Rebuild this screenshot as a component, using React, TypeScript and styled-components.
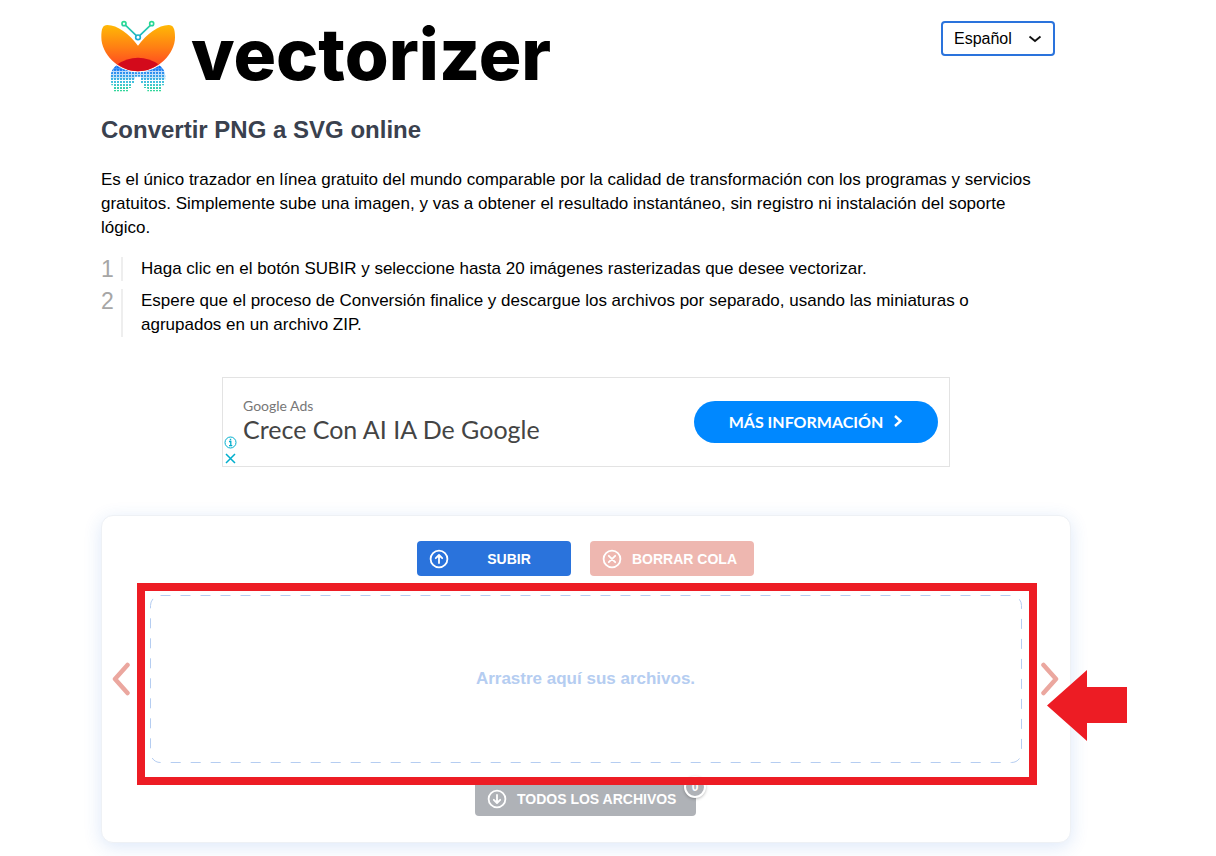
import React, { useState } from 'react';
import styled, { createGlobalStyle, css } from 'styled-components';

const GlobalStyle = createGlobalStyle`
  *, *::before { box-sizing: border-box; }
  body {
    margin: 0;
    background: #fff;
    color: #000;
    font-family: "Liberation Sans", Arial, sans-serif;
    font-size: 17px;
    line-height: 24px;
  }
`;

const Page = styled.main`
  padding: 20px 44px 13px 0;
  overflow-x: clip;
`;

const Container = styled.div`
  max-width: 970px;
  margin: 0 auto;
`;

const Intro = styled.div`
  padding-right: 16px;
`;

const Header = styled.header`
  display: flex;
  justify-content: space-between;
  align-items: flex-start;
  height: 74px;
`;

const Brand = styled.a`
  display: flex;
  gap: 16px;
  color: #000;
  text-decoration: none;
`;

const Wordmark = styled.span`
  font-family: Inter, sans-serif;
  font-weight: 800;
  font-size: 71px;
  line-height: 68px;
`;

const SelectWrap = styled.div`
  position: relative;
  margin-top: 1px;
  svg {
    position: absolute;
    right: 13px;
    top: 14px;
    pointer-events: none;
  }
`;

const LanguageSelect = styled.select`
  appearance: none;
  width: 114px;
  height: 35px;
  padding: 0 32px 0 11px;
  border: 2px solid #2a73dc;
  border-radius: 4px;
  background: #fff;
  color: #000;
  font: 16px "Liberation Sans", Arial, sans-serif;
`;

const Title = styled.h1`
  margin: 20px 0 0;
  color: #3a414e;
  font-size: 24px;
  line-height: 32px;
`;

const Lead = styled.p`
  margin: 22px 0 0;
`;

const Steps = styled.ol`
  display: flex;
  flex-direction: column;
  gap: 8px;
  margin: 17px 0 0;
  padding: 0 20px 0 0;
  list-style: none;
  counter-reset: step;
`;

const Step = styled.li`
  display: flex;
  counter-increment: step;
  &::before {
    content: counter(step);
    flex: 0 0 22px;
    border-right: 2px solid #eee;
    color: #a6a6a6;
    font-size: 23px;
    line-height: 24px;
  }
  span { padding-left: 18px; }
`;

const Ad = styled.aside`
  position: relative;
  display: flex;
  align-items: center;
  justify-content: space-between;
  max-width: 728px;
  min-height: 90px;
  margin: 40px auto 0;
  padding: 0 11px 0 20px;
  border: 1px solid #e3e3e3;
`;

const AdCopy = styled.div`
  display: flex;
  flex-direction: column;
  padding-bottom: 2px;
  font-family: Lato, sans-serif;
`;

const AdBrand = styled.span`
  color: #777;
  font-size: 14px;
  line-height: 16px;
`;

const AdHeadline = styled.span`
  color: #444;
  font-size: 25px;
  line-height: 30px;
`;

const AdButton = styled.button`
  display: flex;
  align-items: center;
  justify-content: center;
  gap: 10px;
  width: 244px;
  height: 42px;
  padding: 0 6px 2px;
  border: 0;
  border-radius: 21px;
  background: #08f;
  color: #fff;
  font: 700 16px Lato, sans-serif;
`;

const AdMarks = styled.div`
  position: absolute;
  left: 1px;
  bottom: 1px;
  display: flex;
  flex-direction: column;
  gap: 3px;
`;

const MarkButton = styled.button`
  display: flex;
  padding: 0;
  border: 0;
  background: none;
  color: #00aecd;
`;

const Card = styled.section`
  margin-top: 48px;
  padding: 25px 11px 26px 10px;
  border: 1px solid #eef1f5;
  border-radius: 12px;
  background: #fff;
  box-shadow: 0 4px 18px rgba(42, 115, 220, 0.16);
`;

const Actions = styled.div`
  display: flex;
  justify-content: center;
  gap: 19px;
`;

const tones = { primary: '#2a73dc', danger: '#eeb7b0', muted: '#afb2b7' };

const ActionButton = styled.button<{ $tone: keyof typeof tones; $width: number; $spread?: boolean }>`
  position: relative;
  display: flex;
  align-items: center;
  gap: 10px;
  width: ${p => p.$width}px;
  height: 35px;
  padding: 0 12px;
  border: 0;
  border-radius: 4px;
  background: ${p => tones[p.$tone]};
  color: #fff;
  font: 700 14px "Liberation Sans", Arial, sans-serif;
  white-space: nowrap;
  svg { flex: none; }
  ${p => p.$spread && css`
    span { flex: 1; text-align: center; }
  `}
`;

const Badge = styled.b`
  position: absolute;
  right: -10px;
  top: -5px;
  width: 22px;
  height: 22px;
  border: 2px solid #fff;
  border-radius: 50%;
  background: #afb2b7;
  box-shadow: 0 1px 3px rgba(0, 0, 0, 0.25);
  font-size: 12px;
  line-height: 19px;
  text-align: center;
`;

const Carousel = styled.div`
  display: flex;
  align-items: center;
  margin: 19px 0;
`;

const ArrowButton = styled.button`
  display: flex;
  flex: none;
  padding: 0;
  border: 0;
  background: none;
  color: #eba79f;
`;

const DropArea = styled.div`
  position: relative;
  display: flex;
  flex: 1;
  align-items: center;
  justify-content: center;
  height: 167px;
  margin: 0 20px;
  color: #b5cdf1;
  font-weight: 700;
`;

const DashedOutline = styled.svg`
  position: absolute;
  inset: 0;
  width: 100%;
  height: 100%;
  overflow: visible;
`;

const Highlight = styled.div`
  position: absolute;
  z-index: 1;
  inset: -12px -16px -23px -13px;
  border: 8px solid #ed1c24;
  pointer-events: none;
`;

const Pointer = styled.svg`
  position: absolute;
  z-index: 1;
  top: 75px;
  right: -106px;
  pointer-events: none;
`;

const Download = styled.div`
  display: flex;
  justify-content: center;
`;

function Butterfly() {
  return (
    <svg width="74" height="72" viewBox="33 30 222 216" aria-hidden="true">
      <defs>
        <linearGradient id="wing" x1="0" y1="0" x2="0" y2="1">
          <stop offset="0" stopColor="#ffb905" />
          <stop offset="0.5" stopColor="#ff7d14" />
          <stop offset="1" stopColor="#ff3a24" />
        </linearGradient>
        <linearGradient id="tail" gradientUnits="userSpaceOnUse" x1="0" y1="165" x2="0" y2="246">
          <stop offset="0" stopColor="#0a6cf5" />
          <stop offset="0.3" stopColor="#2f90ef" />
          <stop offset="0.65" stopColor="#46c3dd" />
          <stop offset="1" stopColor="#2fd990" />
        </linearGradient>
        <linearGradient id="antenna" gradientUnits="userSpaceOnUse" x1="0" y1="36" x2="0" y2="88">
          <stop offset="0" stopColor="#2bdc8f" />
          <stop offset="1" stopColor="#1ba9d6" />
        </linearGradient>
        <pattern id="cells" width="9" height="9" patternUnits="userSpaceOnUse" x="63" y="168">
          <rect width="6" height="6" fill="#fff" />
        </pattern>
        <mask id="dots">
          <rect x="33" y="160" width="222" height="86" fill="url(#cells)" />
          <rect x="33" y="160" width="222" height="22" fill="#fff" opacity="0.8" />
          <rect x="33" y="182" width="222" height="26" fill="#fff" opacity="0.3" />
        </mask>
      </defs>
      <path
        fill="url(#tail)"
        mask="url(#dots)"
        d="M80 166Q62 178 62 200L64 226H72V244H116V234H126V220H135V200H153V220H162V234H172V244H216V226H224L226 200Q226 178 208 166Z"
      />
      <path
        fill="url(#wing)"
        stroke="#fff"
        strokeWidth="5"
        paintOrder="stroke"
        d="M144 107C118 72 82 45 52 45C38 45 34 56 34 82C34 132 84 184 144 184C204 184 255 132 255 82C255 56 250 45 236 45C206 45 170 72 144 107Z"
      />
      <path fill="#d30a1b" d="M83 163Q110 143 144 143Q178 143 205 163Q178 184 144 184Q110 184 83 163Z" />
      <g fill="none" stroke="url(#antenna)" strokeWidth="5">
        <path d="M107 46L139 77M181 46L149 77" />
        <circle cx="102" cy="41" r="6" />
        <circle cx="185" cy="41" r="6" />
        <circle cx="144" cy="82" r="7" />
      </g>
    </svg>
  );
}

function CircleIcon({ d }: { d: string }) {
  return (
    <svg width="20" height="20" viewBox="0 0 20 20" fill="none" stroke="currentColor" strokeWidth="1.8" strokeLinecap="round" strokeLinejoin="round" aria-hidden="true">
      <circle cx="10" cy="10" r="8.4" />
      <path d={d} />
    </svg>
  );
}

function CarouselArrow({ label, d }: { label: string; d: string }) {
  return (
    <ArrowButton type="button" aria-label={label}>
      <svg width="18" height="34" viewBox="0 0 18 34" fill="none" stroke="currentColor" strokeWidth="4.500" strokeLinecap="round" strokeLinejoin="round" aria-hidden="true">
        <path d={d} />
      </svg>
    </ArrowButton>
  );
}

export default function App() {
  const [language, setLanguage] = useState('es');
  return (
    <Page>
      <GlobalStyle />
      <Container>
        <Intro>
          <Header>
            <Brand href="#">
              <Butterfly />
              <Wordmark>vectorizer</Wordmark>
            </Brand>
            <SelectWrap>
              <LanguageSelect aria-label="Idioma" value={language} onChange={e => setLanguage(e.target.value)}>
                <option value="es">Español</option>
                <option value="en">English</option>
              </LanguageSelect>
              <svg width="14" height="8" viewBox="0 0 14 8" fill="none" stroke="#111" strokeWidth="1.8" aria-hidden="true">
                <path d="M1.5 1.5L7 6L12.500 1.500" />
              </svg>
            </SelectWrap>
          </Header>
          <Title>Convertir PNG a SVG online</Title>
          <Lead>
            Es el único trazador en línea gratuito del mundo comparable por la calidad de transformación con los
            programas y servicios gratuitos. Simplemente sube una imagen, y vas a obtener el resultado instantáneo, sin
            registro ni instalación del soporte lógico.
          </Lead>
          <Steps>
            <Step>
              <span>Haga clic en el botón SUBIR y seleccione hasta 20 imágenes rasterizadas que desee vectorizar.</span>
            </Step>
            <Step>
              <span>
                Espere que el proceso de Conversión finalice y descargue los archivos por separado, usando las
                miniaturas o agrupados en un archivo ZIP.
              </span>
            </Step>
          </Steps>
        </Intro>

        <Ad>
          <AdCopy>
            <AdBrand>Google Ads</AdBrand>
            <AdHeadline>Crece Con AI IA De Google</AdHeadline>
          </AdCopy>
          <AdButton type="button">
            MÁS INFORMACIÓN
            <svg width="10" height="14" viewBox="0 0 10 14" fill="none" stroke="currentColor" strokeWidth="2.400" aria-hidden="true">
              <path d="M2 2L7.500 7L2 12" />
            </svg>
          </AdButton>
          <AdMarks>
            <MarkButton type="button" aria-label="Información del anuncio">
              <svg width="13" height="13" viewBox="0 0 13 13" fill="none" stroke="currentColor" aria-hidden="true">
                <circle cx="6.500" cy="6.500" r="5.500" />
                <path d="M5 5.500H6.800V9.500M5 9.700H8.300M5.800 3.500H7.200" strokeWidth="1.300" />
              </svg>
            </MarkButton>
            <MarkButton type="button" aria-label="Cerrar anuncio">
              <svg width="13" height="13" viewBox="0 0 13 13" fill="none" stroke="currentColor" strokeWidth="1.500" aria-hidden="true">
                <path d="M2 2L11 11M11 2L2 11" />
              </svg>
            </MarkButton>
          </AdMarks>
        </Ad>

        <Card>
          <Actions>
            <ActionButton type="button" $tone="primary" $width={154} $spread>
              <CircleIcon d="M10 14V6.300M6.800 9.200L10 6L13.200 9.200" />
              <span>SUBIR</span>
            </ActionButton>
            <ActionButton type="button" $tone="danger" $width={164}>
              <CircleIcon d="M6.800 6.800L13.200 13.200M13.200 6.800L6.800 13.200" />
              <span>BORRAR COLA</span>
            </ActionButton>
          </Actions>
          <Carousel>
            <CarouselArrow label="Anterior" d="M15.500 3L3 17L15.500 31" />
            <DropArea>
              <DashedOutline aria-hidden="true">
                <rect x="0.5" y="0.5" width="100%" height="100%" rx="10" fill="none" stroke="#b5cdf1" strokeDasharray="10 10" />
              </DashedOutline>
              Arrastre aquí sus archivos.
              <Highlight />
              <Pointer width="80" height="71" viewBox="0 0 80 71" fill="#ed1c24" aria-hidden="true">
                <path d="M0 35.500L40 0V17H80V53H40V71Z" />
              </Pointer>
            </DropArea>
            <CarouselArrow label="Siguiente" d="M2.500 3L15 17L2.500 31" />
          </Carousel>
          <Download>
            <ActionButton type="button" $tone="muted" $width={221}>
              <CircleIcon d="M10 6V13.700M6.800 10.800L10 14L13.200 10.800" />
              <span>TODOS LOS ARCHIVOS</span>
              <Badge>0</Badge>
            </ActionButton>
          </Download>
        </Card>
      </Container>
    </Page>
  );
}
